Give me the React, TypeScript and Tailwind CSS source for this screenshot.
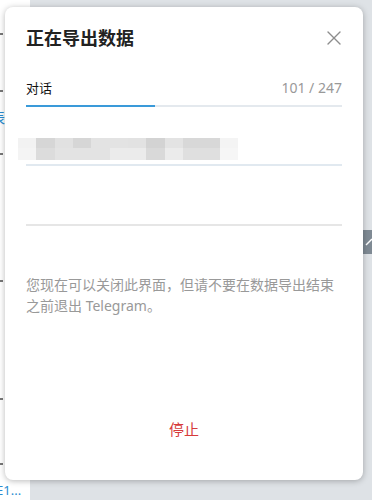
import { X } from "lucide-react";

const mosaic = [
  ["#f2f2f2", "#d6d6d6", "#e1e1e1", "#d6d6d6", "#e3e3e3", "#e3e3e3", "#e2e2e2", "#d3d3d3", "#e3e3e3", "#d8d8d8", "#d8d8d8", "#f4f4f4"],
  ["#f4f4f4", "#dcdcdc", "#e3e3e3", "#e3e3e3", "#e3e3e3", "#ebebeb", "#ebebeb", "#d9d9d9", "#ebebeb", "#dfdfdf", "#dfdfdf", "#f6f6f6"],
];

const fragments = [33, 90, 153, 280, 398, 463];

export default function App() {
  const done = 101;
  const total = 247;
  const pct = (done / total) * 100;

  return (
    <div className="relative flex h-[500px] w-[372px] overflow-hidden bg-[#dee2e6] font-['Noto_Sans','Noto_Sans_CJK_SC',sans-serif]">
      {/* chat list strip behind the dialog */}
      <div className="relative h-full w-[30px] bg-white">
        {fragments.map((y) => (
          <span
            key={y}
            className="absolute left-0 h-[2px] w-[3px] bg-[#777]"
            style={{ top: y }}
          />
        ))}
        <span className="absolute left-[-9px] top-[108px] text-[14px] leading-[20px] text-[#2a8bd0]">
          表
        </span>
        <span className="absolute left-[-4px] top-[480px] text-[13px] leading-[20px] text-[#2a8bd0]">
          E1...
        </span>
      </div>
      <div className="flex-1" />

      <div className="absolute left-[363px] top-[230px] flex h-[24px] w-[20px] items-center bg-[#7f8a94] pl-[2px]">
        <svg width="8" height="8" viewBox="0 0 8 8">
          <path d="M1 7 L7 1" stroke="#fff" strokeWidth="1.5" />
        </svg>
      </div>

      {/* dialog */}
      <div className="absolute left-[5px] top-[7px] flex h-[473px] w-[358px] flex-col rounded-[8px] bg-white px-[21px] pt-[18px] shadow-[0_1px_6px_rgba(0,0,0,0.28)]">
        <div className="flex h-[26px] items-center justify-between">
          <h1 className="text-[18px] font-semibold leading-[26px] text-[#222]">
            正在导出数据
          </h1>
          <X className="mr-[-4px] h-6 w-6 text-[#8d8d8d]" strokeWidth={1.4} />
        </div>

        <div className="mt-[27px] flex h-[20px] items-center justify-between">
          <span className="text-[13px] leading-[20px] text-[#111]">对话</span>
          <span className="text-[14px] leading-[20px] text-[#999]">
            {done} / {total}
          </span>
        </div>

        <div className="mt-[7px] h-[2px] w-full bg-[#e4e9ee]">
          <div className="h-full bg-[#3a9ad9]" style={{ width: `${pct}%` }} />
        </div>

        <div className="ml-[-8px] mt-[31px] grid h-[22px] w-[220px] grid-cols-12 grid-rows-[10px_12px]">
          {mosaic.flat().map((c, i) => (
            <div key={i} style={{ backgroundColor: c }} />
          ))}
        </div>

        <div className="mt-[4px] h-[2px] w-full bg-[#e1e9f0]" />
        <div className="mt-[58px] h-[2px] w-full bg-[#e6e6e6]" />

        <p className="mt-[48px] text-[14px] leading-[21px] text-[#999]">
          您现在可以关闭此界面，但请不要在数据导出结束之前退出 Telegram。
        </p>

        <div className="mt-[103px] flex justify-center">
          <button className="text-[15px] leading-[20px] text-[#d63b3b]">停止</button>
        </div>
      </div>
    </div>
  );
}
